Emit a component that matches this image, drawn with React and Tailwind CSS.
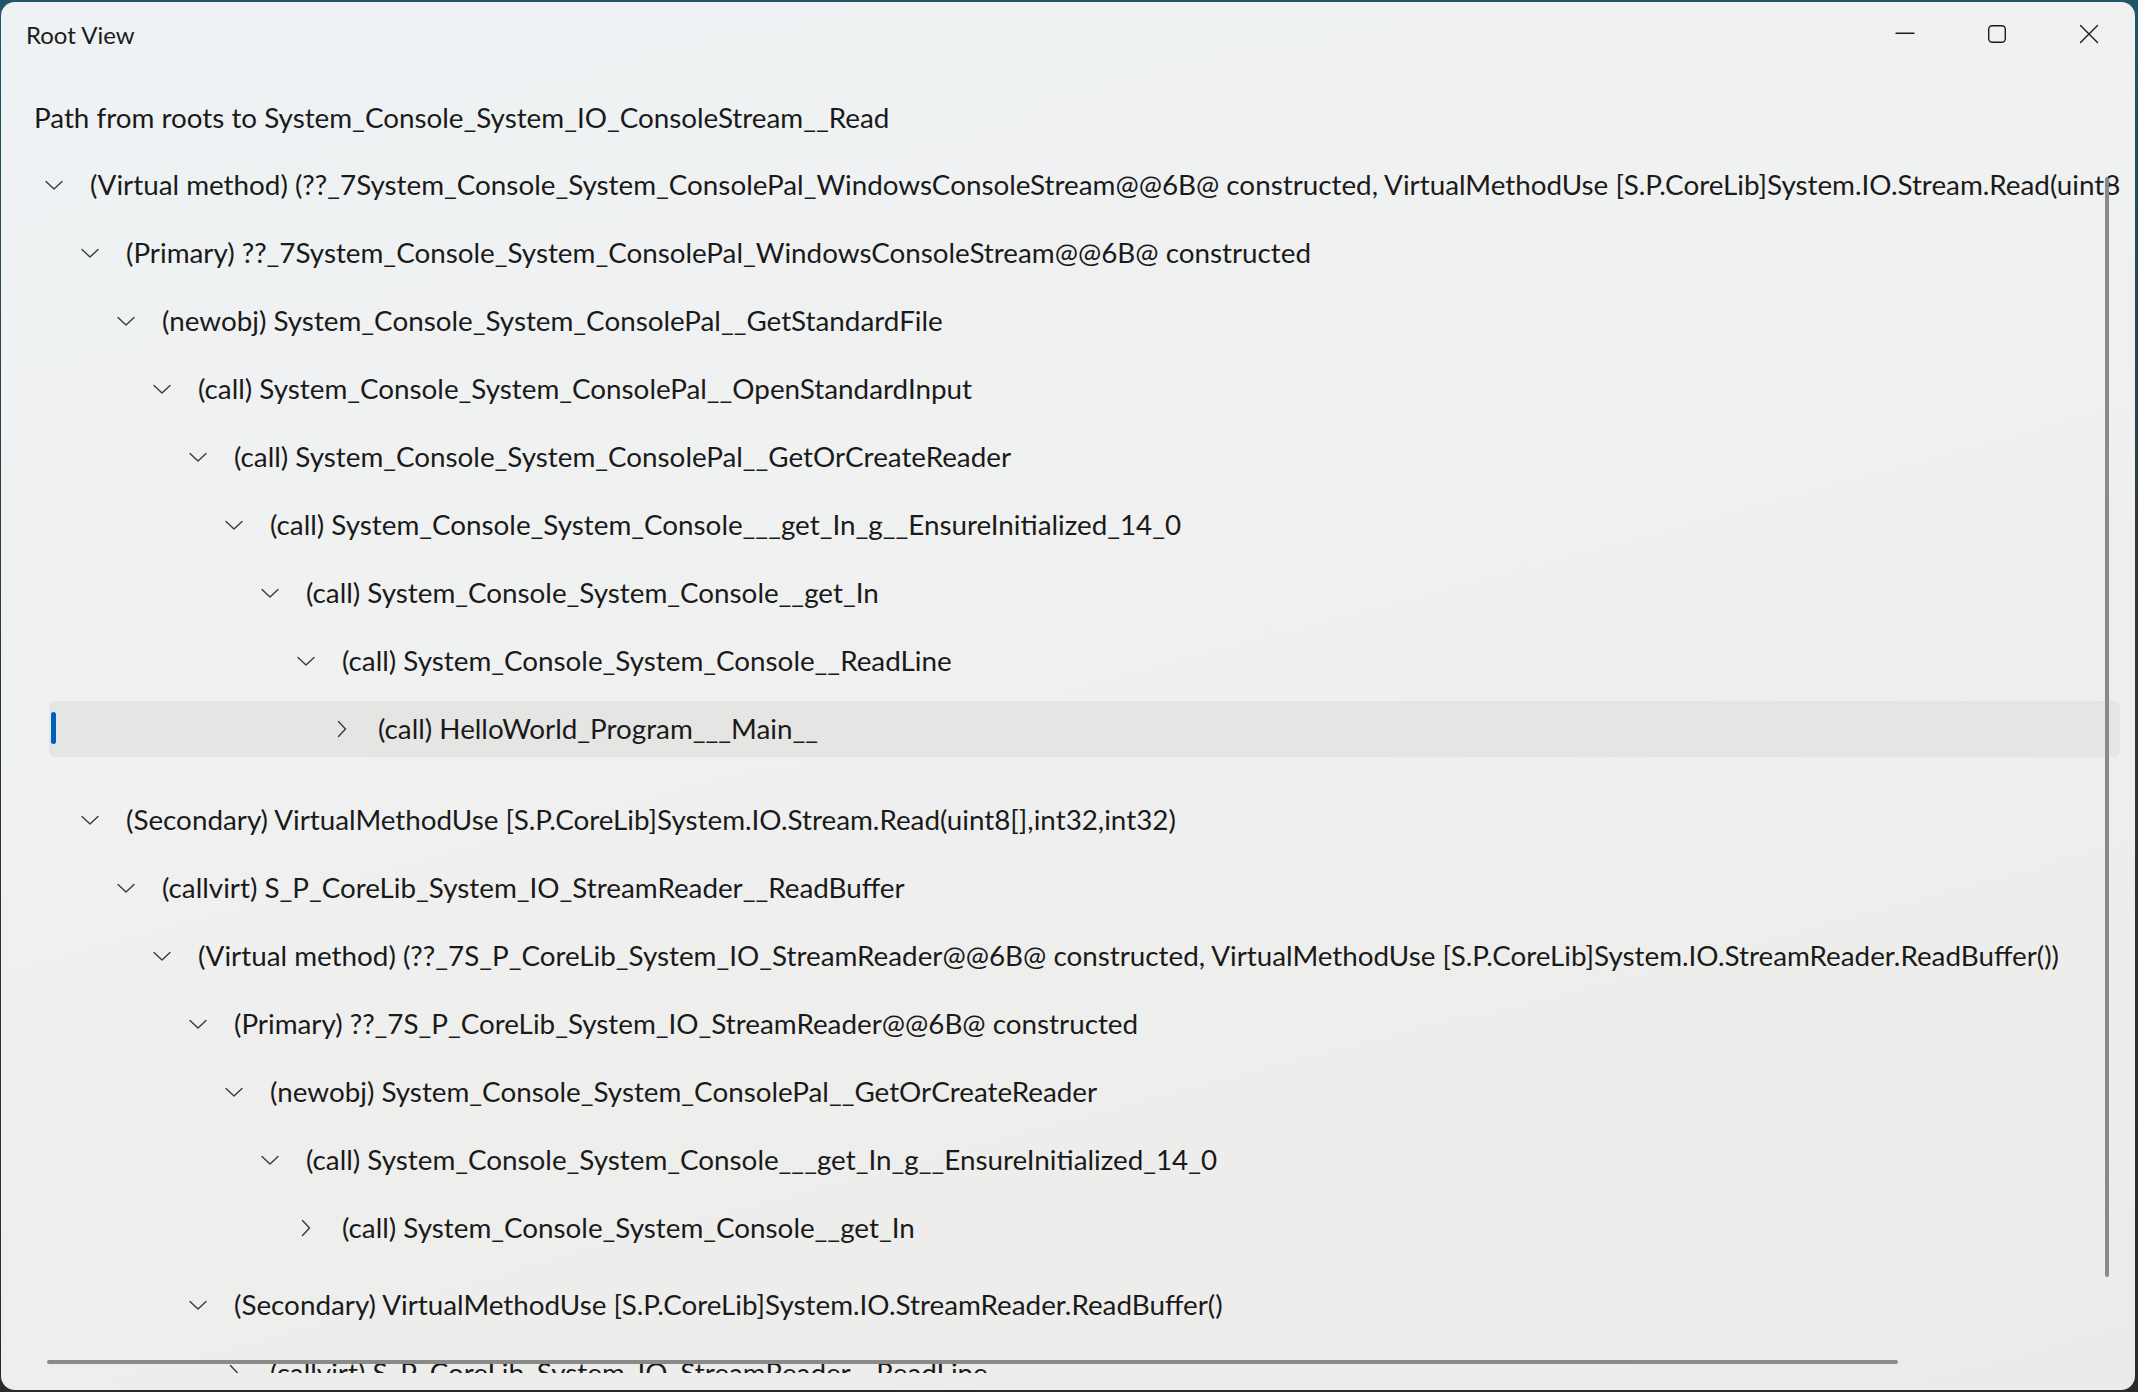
const FONT = { fontFamily: 'Lato, "Open Sans", sans-serif' }

const ROWS = [
  { level: 0, open: true, text: '(Virtual method) (??_7System_Console_System_ConsolePal_WindowsConsoleStream@@6B@ constructed, VirtualMethodUse [S.P.CoreLib]System.IO.Stream.Read(uint8[],int32,int32))' },
  { level: 1, open: true, text: '(Primary) ??_7System_Console_System_ConsolePal_WindowsConsoleStream@@6B@ constructed' },
  { level: 2, open: true, text: '(newobj) System_Console_System_ConsolePal__GetStandardFile' },
  { level: 3, open: true, text: '(call) System_Console_System_ConsolePal__OpenStandardInput' },
  { level: 4, open: true, text: '(call) System_Console_System_ConsolePal__GetOrCreateReader' },
  { level: 5, open: true, text: '(call) System_Console_System_Console___get_In_g__EnsureInitialized_14_0' },
  { level: 6, open: true, text: '(call) System_Console_System_Console__get_In' },
  { level: 7, open: true, text: '(call) System_Console_System_Console__ReadLine' },
  { level: 8, open: false, selected: true, text: '(call) HelloWorld_Program___Main__' },
  { level: 1, open: true, gap: 'mt-[23px]', text: '(Secondary) VirtualMethodUse [S.P.CoreLib]System.IO.Stream.Read(uint8[],int32,int32)' },
  { level: 2, open: true, text: '(callvirt) S_P_CoreLib_System_IO_StreamReader__ReadBuffer' },
  { level: 3, open: true, text: '(Virtual method) (??_7S_P_CoreLib_System_IO_StreamReader@@6B@ constructed, VirtualMethodUse [S.P.CoreLib]System.IO.StreamReader.ReadBuffer())' },
  { level: 4, open: true, text: '(Primary) ??_7S_P_CoreLib_System_IO_StreamReader@@6B@ constructed' },
  { level: 5, open: true, text: '(newobj) System_Console_System_ConsolePal__GetOrCreateReader' },
  { level: 6, open: true, text: '(call) System_Console_System_Console___get_In_g__EnsureInitialized_14_0' },
  { level: 7, open: false, text: '(call) System_Console_System_Console__get_In' },
  { level: 4, open: true, gap: 'mt-[9px]', text: '(Secondary) VirtualMethodUse [S.P.CoreLib]System.IO.StreamReader.ReadBuffer()' },
  { level: 5, open: false, text: '(callvirt) S_P_CoreLib_System_IO_StreamReader__ReadLine' },
]

function Chevron({ open }) {
  if (open) {
    return (
      <svg width="18" height="10" viewBox="0 0 18 10" className="shrink-0">
        <path d="M1 1.5 L9 9 L17 1.5" fill="none" stroke="#3a3a3a" strokeWidth="1.4" strokeLinecap="round" strokeLinejoin="round" />
      </svg>
    )
  }
  return (
    <svg width="10" height="18" viewBox="0 0 10 18" className="shrink-0">
      <path d="M1.5 1.5 L8.5 9 L1.5 16.5" fill="none" stroke="#3a3a3a" strokeWidth="1.4" strokeLinecap="round" strokeLinejoin="round" />
    </svg>
  )
}

function TreeRow({ row }) {
  return (
    <div className={['h-[68px] py-[6px]', row.gap || ''].join(' ')}>
      <div
        className={[
          'relative flex h-[56px] items-center whitespace-nowrap rounded-[6px]',
          row.selected ? 'bg-[#e5e5e4]' : '',
        ].join(' ')}
        style={{ paddingLeft: row.level * 36 }}
      >
        {row.selected ? (
          <div className="absolute left-[2px] top-[11px] h-[32px] w-[5px] rounded-full bg-[#005fb8]" />
        ) : null}
        <div className="flex w-[10px] shrink-0 justify-center">
          <Chevron open={row.open} />
        </div>
        <span className="ml-[31px] text-[27.8px] leading-none text-[#1a1a1a]">{row.text}</span>
      </div>
    </div>
  )
}

function WindowButtons() {
  return (
    <div className="flex">
      <div className="flex h-[64px] w-[92px] items-center justify-center">
        <svg width="20" height="20" viewBox="0 0 20 20">
          <path d="M1 9.3 H19" stroke="#1b1b1b" strokeWidth="1.4" strokeLinecap="round" />
        </svg>
      </div>
      <div className="flex h-[64px] w-[92px] items-center justify-center">
        <svg width="20" height="20" viewBox="0 0 20 20">
          <rect x="1.7" y="1.7" width="16.6" height="16.6" rx="3.5" fill="none" stroke="#1b1b1b" strokeWidth="1.4" />
        </svg>
      </div>
      <div className="flex h-[64px] w-[92px] items-center justify-center">
        <svg width="20" height="20" viewBox="0 0 20 20">
          <path d="M1.5 1.5 L18.5 18.5 M18.5 1.5 L1.5 18.5" stroke="#1b1b1b" strokeWidth="1.4" strokeLinecap="round" />
        </svg>
      </div>
    </div>
  )
}

export default function App() {
  return (
    <div
      className="h-[1392px] w-[2138px] bg-[linear-gradient(180deg,#1f566a_0%,#33393c_40%,#2a2a2a_100%)] pb-[2px] pl-[1px] pr-[3px] pt-[2px]"
      style={FONT}
    >
      <div className="relative flex h-full flex-col overflow-hidden rounded-[14px] bg-[linear-gradient(165deg,#eef2f4_0%,#f0f1f1_35%,#eeeeed_65%,#ecebea_100%)]">
        <div className="flex h-[64px] shrink-0 items-center justify-between">
          <div className="pl-[25px] pt-[2px] text-[24px] leading-none text-[#1b1b1b]">Root View</div>
          <WindowButtons />
        </div>

        <div className="mt-[32px] flex h-[40px] shrink-0 items-center pl-[33px] text-[27.8px] leading-none text-[#1a1a1a]">
          Path from roots to System_Console_System_IO_ConsoleStream__Read
        </div>

        <div className="mt-[13px] h-[1222px] w-[2119px] shrink-0 overflow-hidden pl-[48px]">
          {ROWS.map((row, i) => (
            <TreeRow key={i} row={row} />
          ))}
        </div>

        <div className="absolute right-[26px] top-[175px] h-[1100px] w-[4px] rounded-full bg-[#8a8a8a]" />
        <div className="absolute left-[46px] top-[1358px] h-[4px] w-[1851px] rounded-full bg-[#8a8a8a]" />
      </div>
    </div>
  )
}
